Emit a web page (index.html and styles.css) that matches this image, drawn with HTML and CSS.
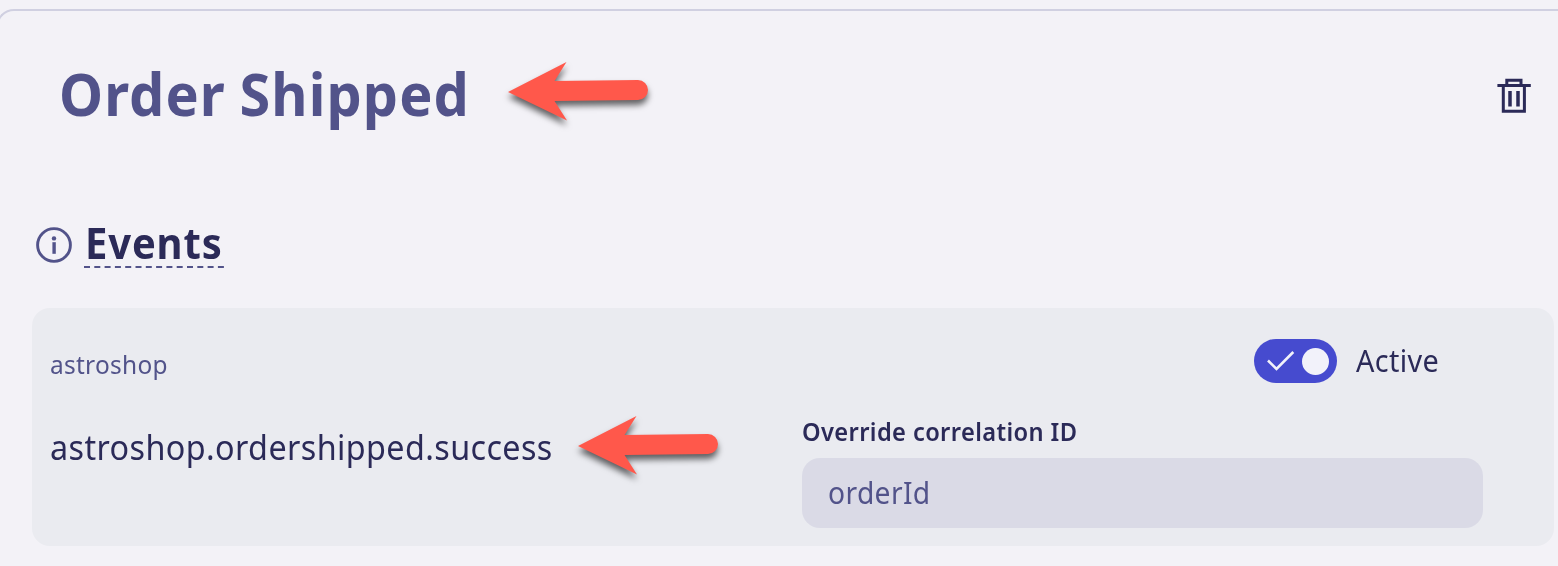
FILE: index.html
```html
<!DOCTYPE html>
<html lang="en">
<head>
<meta charset="utf-8">
<title>Order Shipped</title>
<link rel="stylesheet" href="styles.css">
</head>
<body>
<main class="step">
  <header class="step-header">
    <h1 class="title"><span class="fit fit-title">Order Shipped</span></h1>
    <button class="delete" aria-label="Delete">
      <svg width="36" height="38" viewBox="0 0 36 38" fill="none" stroke="#2b2a58" stroke-width="3">
        <path d="M1.4 8.6H34.8M10.8 8V3.2H25V8M7.3 8.6V34.3H28.4V8.6"/><path stroke-width="3.5" d="M14 14V29.5M22 14V29.5"/>
      </svg>
    </button>
  </header>
  <div class="section-heading">
    <svg class="info" width="36" height="36" viewBox="0 0 36 36">
      <circle cx="18" cy="18" r="16.4" fill="none" stroke="#52538a" stroke-width="2.9"/>
      <circle cx="18" cy="11.4" r="2.2" fill="#52538a"/>
      <path d="M16.4 15.2h3.4v11.6h-3.4z" fill="#52538a"/>
    </svg>
    <h2 class="events"><span class="fit fit-events">Events</span>
      <svg class="dashes" width="140" height="2"><path d="M0 1H140" stroke="#52538a" stroke-width="2" stroke-dasharray="6 4.3"/></svg>
    </h2>
  </div>
  <section class="event">
    <div class="event-info">
      <div class="provider"><span class="fit fit-provider">astroshop</span></div>
      <div class="event-type"><span class="fit fit-type">astroshop.ordershipped.success</span></div>
    </div>
    <div class="event-settings">
      <div class="active-row">
        <div class="toggle">
          <svg width="28" height="22" viewBox="0 0 28 22" fill="none" stroke="#f2f2fa" stroke-width="2.6"><path d="M1 10.5L9.5 19L26.3 2"/></svg>
          <span class="knob"></span>
        </div>
        <span class="active-label"><span class="fit fit-active">Active</span></span>
      </div>
      <div class="field-label"><span class="fit fit-label">Override correlation ID</span></div>
      <div class="field"><span class="fit fit-value">orderId</span></div>
    </div>
  </section>
</main>
<svg class="arrow arrow-title" width="142" height="62" viewBox="0 0 142 62"><path d="M0 31L58.500 1L46.500 20L130 19A10 10 0 0 1 130 39L46.500 40L59 59.500Z" fill="#ff584b"/></svg>
<svg class="arrow arrow-event" width="142" height="62" viewBox="0 0 142 62"><path d="M0 31L58.500 1L46.500 20L130 19A10 10 0 0 1 130 39L46.500 40L59 59.500Z" fill="#ff584b"/></svg>
</body>
</html>
```
FILE: styles.css
```css
* { box-sizing: border-box; }
html, body { height: 100%; overflow: hidden; }
body {
  position: relative;
  margin: 0;
  padding-top: 9px;
  background: #f3f2f7;
  color: #2b2a58;
  font-family: "Noto Sans", sans-serif;
}
.step {
  width: 1562px;
  height: 557px;
  margin-left: -4px;
  padding-left: 34px;
  border: 2px solid #d0d0e1;
  border-width: 2px 0 0 2px;
  border-radius: 18px 0 0 0;
}
.step-header {
  display: flex;
  width: 1501px;
  padding: 42px 0 0 27px;
  justify-content: space-between;
  align-items: flex-start;
}
.fit { display: inline-block; white-space: nowrap; transform-origin: 0 50%; }
.fit-title { letter-spacing: 1.15px; word-spacing: -2px; transform: scaleX(.93); }
.fit-events { letter-spacing: .9px; transform: scaleX(.93); }
.fit-provider { letter-spacing: .3px; transform: scaleX(.94); }
.fit-type { letter-spacing: .43px; transform: scaleX(.95); }
.fit-active { letter-spacing: .4px; transform: scaleX(.96); }
.fit-label { letter-spacing: .42px; transform: scaleX(.91); }
.fit-value { letter-spacing: .4px; transform: scaleX(.94); }
.title { margin: 0; color: #52538a; font-size: 60px; line-height: 81px; font-weight: 700; }
.delete { display: flex; margin: 24px 1px 0 0; padding: 0; border: 0; background: none; }
.section-heading { display: flex; height: 48px; margin-top: 86px; padding-left: 4px; gap: 12px; }
.info { margin-top: 7px; }
.events { display: flex; flex-direction: column; width: 140px; margin: 0; font-size: 43px; line-height: 46px; font-weight: 700; }
.events .fit { margin-left: 1px; }
.dashes { display: block; flex: none; }
.event {
  display: flex;
  width: 1522px;
  height: 238px;
  margin-top: 40px;
  padding-left: 18px;
  border-radius: 18px;
  background: #eaebf0;
}
.event-info { width: 752px; padding-top: 36px; }
.provider { color: #52538a; font-size: 26px; line-height: 40px; }
.event-type { margin-top: 39px; font-size: 34px; line-height: 48px; }
.event-settings { width: 681px; }
.active-row { display: flex; margin: 31px 0 0 452px; gap: 19px; }
.toggle {
  display: flex;
  width: 83px;
  height: 44px;
  padding: 0 8px 0 13px;
  align-items: center;
  justify-content: space-between;
  border-radius: 22px;
  background: #464bcf;
}
.knob { width: 27px; height: 27px; border-radius: 50%; background: #f2f2fa; }
.active-label { font-size: 30px; line-height: 44px; }
.field-label { margin-top: 32px; font-size: 26px; line-height: 32px; font-weight: 600; }
.field {
  height: 70px;
  margin-top: 11px;
  padding-left: 26px;
  border-radius: 18px;
  background: #dadae6;
  color: #52538a;
  font-size: 30px;
  line-height: 70px;
}
.arrow { position: absolute; overflow: visible; filter: drop-shadow(0 5px 3px rgba(0, 0, 0, .6)); }
.arrow-title { left: 508px; top: 61px; }
.arrow-event { left: 578px; top: 415px; }
```
